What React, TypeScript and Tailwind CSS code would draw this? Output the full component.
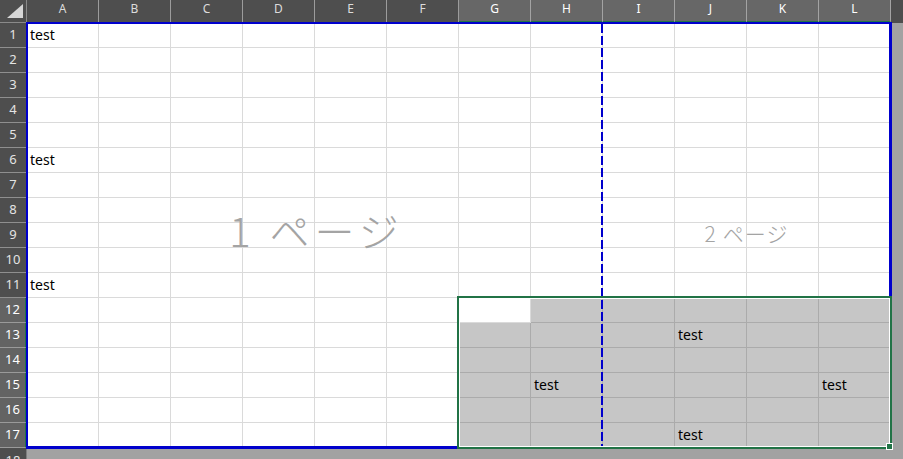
import React from 'react';

const COLS = ['A', 'B', 'C', 'D', 'E', 'F', 'G', 'H', 'I', 'J', 'K', 'L'];
const ROWS = Array.from({ length: 17 }, (_, i) => i + 1);

const values: Record<string, string> = {
  A1: 'test',
  A6: 'test',
  A11: 'test',
  J13: 'test',
  H15: 'test',
  L15: 'test',
  J17: 'test',
};

// selection is G12:L17, G12 is the active cell
const selCol = (c: number) => c >= 6;
const selRow = (r: number) => r >= 12;

const Cell: React.FC<{ c: number; r: number }> = ({ c, r }) => {
  const key = `${COLS[c]}${r}`;
  const filled = selCol(c) && selRow(r) && !(c === 6 && r === 12);
  return (
    <div
      className={
        filled
          ? 'border-r border-b border-[#ababab] bg-[#c6c6c6] pl-[3px] text-[14px] leading-[23px] text-black whitespace-nowrap overflow-visible'
          : 'border-r border-b border-[#dadada] bg-white pl-[3px] text-[14px] leading-[23px] text-black whitespace-nowrap overflow-visible'
      }
    >
      {values[key] ?? ''}
    </div>
  );
};

export default function App() {
  return (
    <div className="relative w-[903px] h-[459px] overflow-hidden bg-[#a2a2a2] font-['Noto_Sans',sans-serif]">
      <div className="grid grid-cols-[27px_repeat(12,72px)_1fr] grid-rows-[23px_repeat(17,25px)_1fr] w-full h-full">
        {/* corner */}
        <div className="relative bg-[#4e4e4e] border-r border-b border-[#8a8a8a]">
          <svg width="27" height="23" className="absolute left-0 top-0">
            <polygon points="7,18 23,18 23,4" fill="#d6d6d6" />
          </svg>
        </div>

        {/* column headers */}
        {COLS.map((col, c) => (
          <div
            key={col}
            className={
              selCol(c)
                ? 'flex justify-center pt-[3px] bg-[#676767] border-r border-[#a3a3a3] border-b-2 border-b-[#217346] text-[12px] leading-[11px] text-white'
                : 'flex justify-center pt-[3px] bg-[#4e4e4e] border-r border-[#9c9c9c] border-b border-b-[#8a8a8a] text-[12px] leading-[11px] text-[#dcdcdc]'
            }
          >
            {col}
          </div>
        ))}
        <div className="bg-[#4e4e4e]" />

        {/* rows */}
        {ROWS.map((r) => (
          <React.Fragment key={r}>
            <div
              className={
                selRow(r)
                  ? 'flex items-center justify-center bg-[#636363] border-b border-[#9a9a9a] border-r-2 border-r-[#217346] text-[13px] text-white'
                  : 'flex items-center justify-center bg-[#4e4e4e] border-b border-[#8f8f8f] border-r border-r-[#7e7e7e] text-[13px] text-[#e4e4e4]'
              }
            >
              {r}
            </div>
            {COLS.map((_, c) => (
              <Cell key={c} c={c} r={r} />
            ))}
            <div />
          </React.Fragment>
        ))}

        {/* row 18, cut off */}
        <div className="flex justify-center pt-[3px] bg-[#4e4e4e] border-r border-[#7e7e7e] text-[13px] text-[#e4e4e4]">
          18
        </div>
      </div>

      {/* page watermarks */}
      <div className="absolute left-[27px] top-[23px] w-[575px] h-[425px] flex items-center justify-center pointer-events-none">
        <span className="mb-[12px] ml-[4px] font-['Noto_Sans_CJK_JP',sans-serif] font-light text-[40px] tracking-[5px] text-[#a4a4a4] whitespace-nowrap">
          1<span className="inline-block w-[14px]" />ページ
        </span>
      </div>
      <div className="absolute left-[602px] top-[23px] w-[289px] h-[425px] flex items-center justify-center pointer-events-none">
        <span className="mb-[4px] font-['Noto_Sans_CJK_JP',sans-serif] font-light text-[21px] tracking-[1px] text-[#a4a4a4] whitespace-nowrap">
          2<span className="inline-block w-[6px]" />ページ
        </span>
      </div>

      {/* print area */}
      <div className="absolute left-[26px] top-[22px] w-[866px] h-[427px] border-t-2 border-l-2 border-r-[3px] border-b-[3px] border-[#0000cc] pointer-events-none" />

      {/* page break */}
      <div className="absolute left-[601px] top-[24px] w-[2px] h-[422px] bg-[repeating-linear-gradient(to_bottom,#0000cc_0px,#0000cc_9px,transparent_9px,transparent_12px)] pointer-events-none" />

      {/* selection G12:L17 */}
      <div className="absolute left-[457px] top-[296px] w-[435px] h-[153px] border-2 border-[#217346] shadow-[inset_0_0_0_1px_#ffffff] pointer-events-none" />
      <div className="absolute left-[886px] top-[443px] w-[7px] h-[7px] bg-[#217346] border border-white" />
    </div>
  );
}
